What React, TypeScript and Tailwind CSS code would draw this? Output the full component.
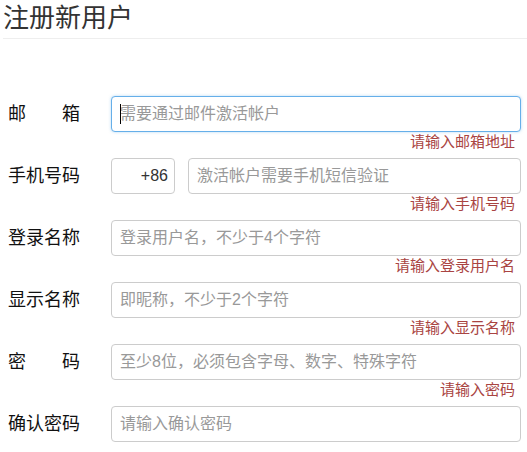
import React from 'react';

const font = { fontFamily: '"Liberation Sans", "Noto Sans CJK SC", sans-serif' };

type Field = {
  label: string;
  placeholder: string;
  error?: string;
  spread?: boolean;
  phone?: boolean;
  focused?: boolean;
  type?: string;
};

const fields: Field[] = [
  { label: '邮箱', placeholder: '需要通过邮件激活帐户', error: '请输入邮箱地址', spread: true, focused: true },
  { label: '手机号码', placeholder: '激活帐户需要手机短信验证', error: '请输入手机号码', phone: true },
  { label: '登录名称', placeholder: '登录用户名，不少于4个字符', error: '请输入登录用户名' },
  { label: '显示名称', placeholder: '即昵称，不少于2个字符', error: '请输入显示名称' },
  { label: '密码', placeholder: '至少8位，必须包含字母、数字、特殊字符', error: '请输入密码', spread: true, type: 'password' },
  { label: '确认密码', placeholder: '请输入确认密码', type: 'password' },
];

const inputBase =
  'h-[36px] rounded-[4px] border bg-white px-[8px] text-[16px] text-[#333] outline-none placeholder:text-[#999]';

function Row({ f }: { f: Field }) {
  return (
    <div className="flex items-start">
      {/* label column */}
      <div className="w-[111px] shrink-0 pl-[8px]">
        <div
          className={
            'flex h-[36px] w-[72px] items-center text-[18px] text-[#111] ' +
            (f.spread ? 'justify-between' : '')
          }
        >
          {f.spread ? (
            <>
              <span>{f.label[0]}</span>
              <span>{f.label[1]}</span>
            </>
          ) : (
            <span>{f.label}</span>
          )}
        </div>
      </div>

      {/* input column */}
      <div className="mr-[6px] flex-1">
        {f.phone ? (
          <div className="flex gap-[13px]">
            <div className="flex h-[36px] w-[64px] shrink-0 items-center justify-end rounded-[4px] border border-[#ccc] pr-[6px] text-[16px] text-[#333]">
              +86
            </div>
            <input className={inputBase + ' w-full flex-1 border-[#ccc]'} placeholder={f.placeholder} />
          </div>
        ) : (
          <div className="relative">
            <input
              type={f.type ?? 'text'}
              className={
                inputBase +
                ' block w-full ' +
                (f.focused ? 'border-[#66afe9] shadow-[0_0_3px_rgba(102,175,233,0.5)]' : 'border-[#ccc]')
              }
              placeholder={f.placeholder}
            />
            {f.focused && (
              <span className="absolute left-[9px] top-[8px] h-[20px] w-[1px] bg-black" />
            )}
          </div>
        )}
        <div className="h-[26px] pr-[6px] text-right text-[15px] leading-[20px] text-[#a94442]">
          {f.error}
        </div>
      </div>
    </div>
  );
}

export default function App() {
  return (
    <div className="h-[452px] w-[527px] overflow-hidden bg-white" style={font}>
      <h1 className="ml-[3px] border-b border-[#eee] pb-[1px] text-[26px] font-normal leading-[37px] text-[#333]">
        注册新用户
      </h1>

      <form className="mt-[57px]">
        {fields.map((f) => (
          <Row key={f.label} f={f} />
        ))}
      </form>
    </div>
  );
}
